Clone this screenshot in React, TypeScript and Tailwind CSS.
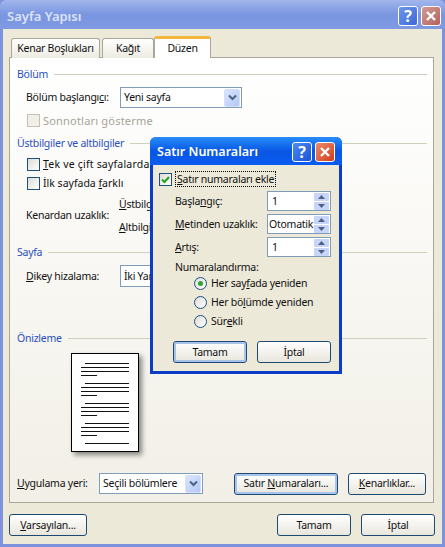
import type { ReactNode } from 'react'

const pageLines = [
  [85, 363], [81, 367], [81, 371], [81, 375, 97],
  [85, 383], [81, 387], [81, 391], [81, 395, 97],
  [85, 403], [81, 407], [81, 411], [81, 415, 97],
  [85, 423], [81, 427], [81, 431], [81, 435, 97],
  [85, 443],
]

function Chevron() {
  return (
    <svg width="9" height="7" viewBox="0 0 9 7" fill="none">
      <path d="M1 1.5l3.5 3.5L8 1.5" stroke="#4d6185" strokeWidth="2" />
    </svg>
  )
}

function Select({ text, className }: { text: string; className: string }) {
  return (
    <div className={`flex items-center justify-between bg-white border border-[#7f9db9] pl-[3px] pr-px ${className}`}>
      <span className="whitespace-nowrap">{text}</span>
      <div className="flex items-center justify-center w-[16px] h-[18px] shrink-0 rounded-[2px] bg-gradient-to-br from-[#dbe6fd] to-[#b3c7f5] border border-[#d3dffb]">
        <Chevron />
      </div>
    </div>
  )
}

function Button({ children, className, focused }: { children: ReactNode; className: string; focused?: boolean }) {
  return (
    <div
      className={`flex items-center justify-center rounded-[3px] border border-[#1d4a73] bg-gradient-to-b from-white to-[#e8e6dc] ${focused ? 'shadow-[inset_0_0_0_2px_#a9c3ea]' : ''} ${className}`}
    >
      <span className="whitespace-nowrap">{children}</span>
    </div>
  )
}

function Check({ checked, disabled }: { checked?: boolean; disabled?: boolean }) {
  return (
    <div
      className={`flex items-center justify-center w-[13px] h-[13px] shrink-0 border ${disabled ? 'border-[#c4c2b6] bg-[#f1efe6]' : 'border-[#1c5180] bg-gradient-to-br from-[#dcdcd6] to-white'}`}
    >
      {checked && (
        <svg width="11" height="11" viewBox="0 0 11 11" fill="none">
          <path d="M2 5.5l2.5 2.5L9 3" stroke="#21a121" strokeWidth="2" />
        </svg>
      )}
    </div>
  )
}

function Radio({ on, children }: { on?: boolean; children: ReactNode }) {
  return (
    <div className="flex items-center gap-[4px] h-[19px]">
      <div className="flex items-center justify-center w-[13px] h-[13px] rounded-full border border-[#1c5180] bg-gradient-to-br from-[#dcdcd6] to-white">
        {on && <div className="w-[5px] h-[5px] rounded-full bg-[#2fa52f]" />}
      </div>
      <span className="whitespace-nowrap">{children}</span>
    </div>
  )
}

function Spinner({ value, narrow }: { value: string; narrow?: boolean }) {
  return (
    <div className={`flex items-center justify-between w-[64px] h-[20px] bg-white border border-[#7f9db9] pr-px ${narrow ? 'pl-[1px]' : 'pl-[4px]'}`}>
      <span>{value}</span>
      <div className="flex flex-col gap-px w-[15px] shrink-0">
        <div className="flex items-center justify-center h-[8px] rounded-[1px] bg-[#c6d5f8]">
          <svg width="7" height="4" viewBox="0 0 7 4"><path d="M3.5 0L7 4H0z" fill="#4d6185" /></svg>
        </div>
        <div className="flex items-center justify-center h-[8px] rounded-[1px] bg-[#c6d5f8]">
          <svg width="7" height="4" viewBox="0 0 7 4"><path d="M0 0h7L3.5 4z" fill="#4d6185" /></svg>
        </div>
      </div>
    </div>
  )
}

function Section({ title, className }: { title: string; className: string }) {
  return (
    <div className={`flex items-center gap-[6px] h-[16px] pl-[7px] pr-[6px] ${className}`}>
      <span className="text-[#2a4fc0] whitespace-nowrap">{title}</span>
      <div className="flex-1 h-px bg-[#d0d0bf]" />
    </div>
  )
}

function CaptionButtons({ faded }: { faded?: boolean }) {
  return (
    <div className="flex items-center gap-[3px] mt-[2px]">
      <div className={`flex items-center justify-center w-[20px] h-[20px] rounded-[3px] border border-white bg-gradient-to-br ${faded ? 'from-[#6f96ea] to-[#3d68d8]' : 'from-[#4d8bf2] to-[#1c50d8]'}`}>
        <span className="text-white font-bold text-[16px] leading-none">?</span>
      </div>
      <div className={`flex items-center justify-center w-[20px] h-[20px] rounded-[3px] border border-white bg-gradient-to-br ${faded ? 'from-[#d49a94] to-[#b4625e]' : 'from-[#ec8a6a] to-[#d0391a]'}`}>
        <svg width="12" height="12" viewBox="0 0 12 12" fill="none">
          <path d="M2 2l8 8M10 2l-8 8" stroke="white" strokeWidth="2.4" />
        </svg>
      </div>
    </div>
  )
}

export default function App() {
  return (
    <div className="relative w-[445px] h-[547px] overflow-hidden text-[10.5px] tracking-[-0.25px] leading-none text-[#111] bg-[#7c92dd] font-['Noto_Sans','Open_Sans',sans-serif]">
      <div className="flex items-center justify-between h-[29px] pl-[7px] pr-[4px] rounded-t-[6px] bg-gradient-to-b from-[#a3b6ec] via-[#7a96e0] to-[#7f99e2]">
        <span className="mt-[3px] text-[13px] font-semibold tracking-normal text-[#dbe3f7]">Sayfa Yapısı</span>
        <CaptionButtons faded />
      </div>

      <div className="mx-[3px] h-[515px] pt-[7px] pl-[6px] pr-[8px] bg-[#ece9d8]">
        <div className="relative z-10 flex items-end h-[22px] pl-[2px]">
          <div className="flex items-center justify-center w-[89px] h-[20px] rounded-t-[3px] border border-b-0 border-[#a9a798] bg-gradient-to-b from-white to-[#ecebe2] whitespace-nowrap">Kenar Boşlukları</div>
          <div className="flex items-center justify-center w-[52px] h-[20px] ml-[2px] rounded-t-[3px] border border-b-0 border-[#a9a798] bg-gradient-to-b from-white to-[#ecebe2]">Kağıt</div>
          <div className="flex items-center justify-center w-[57px] h-[22px] rounded-t-[3px] border border-b-0 border-t-[3px] border-x-[#a9a798] border-t-[#f5b63e] bg-white">Düzen</div>
        </div>

        <div className="h-[446px] -mt-px border border-[#a9a798] bg-gradient-to-b from-white to-[#f1efe6]">
          <Section title="Bölüm" className="mt-[8px]" />
          <div className="flex items-center h-[21px] mt-[5px] pl-[16px]">
            <span className="w-[94px] whitespace-nowrap">Bölüm başlangı<u>c</u>ı:</span>
            <Select text="Yeni sayfa" className="w-[122px] h-[21px]" />
          </div>
          <div className="flex items-center gap-[3px] h-[16px] mt-[4px] pl-[17px] text-[#a6a498]">
            <Check disabled />
            <span className="text-[11px] tracking-[0.2px] whitespace-nowrap">Sonnotları gösterme</span>
          </div>

          <Section title="Üstbilgiler ve altbilgiler" className="mt-[7px]" />
          <div className="flex items-center gap-[3px] h-[16px] mt-[5px] pl-[17px]">
            <Check />
            <span className="tracking-[0.2px] whitespace-nowrap"><u>T</u>ek ve çift sayfalarda farklı</span>
          </div>
          <div className="flex items-center gap-[3px] h-[16px] mt-[3px] pl-[17px]">
            <Check />
            <span className="tracking-normal whitespace-nowrap">İlk sayfada <u>f</u>arklı</span>
          </div>
          <div className="flex items-center h-[43px] mt-[3px] pl-[16px]">
            <span className="w-[93px] whitespace-nowrap">Kenardan uzaklık:</span>
            <div className="flex flex-col gap-[3px]">
              <div className="flex items-center h-[20px]"><u>Ü</u>stbilgi:</div>
              <div className="flex items-center h-[20px]"><u>A</u>ltbilgi:</div>
            </div>
          </div>

          <Section title="Sayfa" className="mt-[7px]" />
          <div className="flex items-center h-[22px] mt-[5px] pl-[16px]">
            <span className="w-[94px] whitespace-nowrap"><u>D</u>ikey hizalama:</span>
            <Select text="İki Yana Yasla" className="w-[122px] h-[22px]" />
          </div>

          <Section title="Önizleme" className="mt-[43px]" />
          <div className="w-[68px] h-[99px] mt-[7px] ml-[61px] bg-white border border-black shadow-[3px_3px_5px_rgba(0,0,0,0.45)]">
            <svg width="66" height="97" viewBox="72 354 66 97">
              {pageLines.map(([x, y, end]) => (
                <line key={y} x1={x} x2={end ?? 129} y1={y + 0.5} y2={y + 0.5} stroke="#111" strokeWidth="1" />
              ))}
            </svg>
          </div>
          <div className="flex items-center h-[21px] mt-[21px] pl-[7px]">
            <span className="w-[82px] whitespace-nowrap"><u>U</u>ygulama yeri:</span>
            <Select text="Seçili bölümlere" className="w-[104px] h-[21px]" />
            <Button focused className="w-[104px] h-[22px] ml-[31px]">Satır <u>N</u>umaraları...</Button>
            <Button className="w-[78px] h-[22px] ml-[10px]"><u>K</u>enarlıklar...</Button>
          </div>
        </div>

        <div className="flex items-center h-[22px] mt-[11px]">
          <Button className="w-[78px] h-[22px]"><u>V</u>arsayılan...</Button>
          <Button className="w-[74px] h-[22px] ml-auto">Tamam</Button>
          <Button className="w-[74px] h-[22px] ml-[10px] -mr-[1px]">İptal</Button>
        </div>
      </div>

      <div className="absolute left-[150px] top-[137px] z-20 w-[192px] h-[237px] rounded-t-[6px] border-x-[3px] border-b-[3px] border-[#0a3cc8] bg-[#ece9d8]">
        <div className="flex items-center justify-between h-[28px] -mx-[3px] pl-[7px] pr-[7px] rounded-t-[6px] bg-gradient-to-b from-[#2a8dfa] via-[#0a56e4] to-[#0a5cf0]">
          <span className="mt-[2px] text-[12.5px] font-semibold tracking-normal text-white">Satır Numaraları</span>
          <CaptionButtons />
        </div>
        <div className="flex items-center gap-[3px] h-[16px] mt-[6px] pl-[6px]">
          <Check checked />
          <span className="h-[16px] flex items-center px-px border border-dotted border-black"><span className="whitespace-nowrap"><u>S</u>atır numaraları ekle</span></span>
        </div>
        <div className="flex items-center h-[20px] mt-[4px] pl-[22px]">
          <span className="w-[92px] whitespace-nowrap">Başla<u>n</u>gıç:</span>
          <Spinner value="1" />
        </div>
        <div className="flex items-center h-[20px] mt-[3px] pl-[22px]">
          <span className="w-[92px] whitespace-nowrap"><u>M</u>etinden uzaklık:</span>
          <Spinner value="Otomatik" narrow />
        </div>
        <div className="flex items-center h-[20px] mt-[3px] pl-[22px]">
          <span className="w-[92px] whitespace-nowrap"><u>A</u>rtış:</span>
          <Spinner value="1" />
        </div>
        <div className="flex items-center h-[14px] mt-[3px] pl-[22px]">Numaralandırma:</div>
        <div className="flex flex-col pl-[41px]">
          <Radio on>Her say<u>f</u>ada yeniden</Radio>
          <Radio>Her bö<u>l</u>ümde yeniden</Radio>
          <Radio>Sür<u>e</u>kli</Radio>
        </div>
        <div className="flex gap-[10px] mt-[10px] pl-[20px]">
          <Button focused className="w-[74px] h-[22px]">Tamam</Button>
          <Button className="w-[74px] h-[22px]">İptal</Button>
        </div>
      </div>
    </div>
  )
}
